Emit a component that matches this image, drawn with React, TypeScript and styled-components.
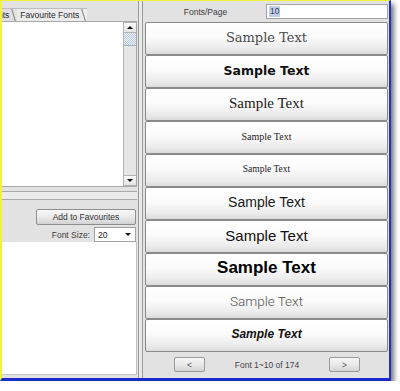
import React from "react";
import styled, { createGlobalStyle } from "styled-components";

const Global = createGlobalStyle`
  html, body { margin: 0; padding: 0; background: #ffffff; overflow: hidden; }
  body { font-family: "Liberation Sans", Arial, sans-serif; }
`;

const Frame = styled.div`
  width: 387px;
  height: 377px;
  border-top: 1px solid #f2f23c;
  border-left: 2px solid #f2f23c;
  border-right: 2px solid #1f2fd0;
  border-bottom: 3px solid #1a2bc8;
  box-shadow: 3px 4px 5px rgba(0, 0, 0, 0.55);
  background: #e2e2e2;
  display: grid;
  grid-template-columns: 135px 8px 1fr;
  overflow: hidden;
  font-size: 8.5px;
  color: #333;
`;

/* ---------- left column ---------- */
const LeftCol = styled.div`
  display: flex;
  flex-direction: column;
  min-height: 0;
`;

const TabStrip = styled.div`
  height: 20px;
  display: flex;
  align-items: flex-end;
  overflow: hidden;
  background: #e2e2e2;
`;

const Tab = styled.div<{ $active?: boolean; $offset?: number }>`
  position: relative;
  flex: none;
  height: 12px;
  line-height: 12px;
  padding: 0 8px 0 3px;
  margin-left: ${(p) => p.$offset ?? 0}px;
  white-space: nowrap;
  color: #2a2a2a;
  border-top: 1px solid #bdbdbd;
  background: ${(p) => (p.$active ? "#ececec" : "#e0e0e0")};
  &::after {
    content: "";
    position: absolute;
    right: 3px;
    top: 0;
    bottom: 0;
    width: 1px;
    background: #7d7d7d;
    transform: skewX(17deg);
  }
`;

const ListBox = styled.div`
  height: 166px;
  box-sizing: border-box;
  background: #ffffff;
  border-top: 1px solid #a8a8a8;
  border-bottom: 1px solid #a8a8a8;
  border-right: 1px solid #a8a8a8;
  display: flex;
  justify-content: flex-end;
`;

const ScrollBar = styled.div`
  width: 12px;
  display: flex;
  flex-direction: column;
  border-left: 1px solid #b4b4b4;
  background: #e6e6e6;
`;

const ScrollArrow = styled.div`
  height: 11px;
  flex: none;
  display: flex;
  align-items: center;
  justify-content: center;
  background: linear-gradient(#fafafa, #e4e4e4);
  border-bottom: 1px solid #b4b4b4;
  border-top: 1px solid #b4b4b4;
  box-sizing: border-box;
`;

const Triangle = styled.span<{ $down?: boolean }>`
  width: 0;
  height: 0;
  border-left: 3px solid transparent;
  border-right: 3px solid transparent;
  ${(p) =>
    p.$down
      ? "border-top: 3px solid #111;"
      : "border-bottom: 3px solid #111;"}
`;

const Thumb = styled.div`
  height: 13px;
  flex: none;
  box-sizing: border-box;
  border-bottom: 1px solid #9fb0cc;
  background-color: #dfe7f3;
  background-image: repeating-conic-gradient(#b9c8de 0% 25%, #eef2f9 0% 50%);
  background-size: 2px 2px;
`;

const Track = styled.div`
  flex: 1;
`;

const GroupHeader = styled.div`
  margin-top: 4px;
  height: 7px;
  border-top: 1px solid #a9a9a9;
  border-bottom: 1px solid #a9a9a9;
  background: #ebebeb;
`;

const GroupBody = styled.div`
  height: 42px;
  box-sizing: border-box;
  padding: 9px 1px 0 0;
  display: flex;
  flex-direction: column;
  align-items: flex-end;
  gap: 2px;
`;

const PushButton = styled.div<{ $w: number }>`
  width: ${(p) => p.$w}px;
  height: 16px;
  box-sizing: border-box;
  display: flex;
  align-items: center;
  justify-content: center;
  border: 1px solid #8e8e8e;
  border-radius: 2px;
  background: linear-gradient(#f8f8f8, #e9e9e9 55%, #d2d2d2);
  color: #333;
  font-size: 8.5px;
`;

const SizeRow = styled.div`
  display: flex;
  align-items: center;
  gap: 4px;
`;

const Label = styled.span`
  color: #3a3a3a;
  font-size: 8.5px;
`;

const Combo = styled.div`
  width: 42px;
  height: 15px;
  box-sizing: border-box;
  border: 1px solid #a2a2a2;
  background: #ffffff;
  display: flex;
  align-items: center;
  justify-content: space-between;
  padding: 0 4px 0 3px;
  color: #222;
`;

const BlankBox = styled.div`
  flex: 1;
  margin-bottom: 3px;
  background: #ffffff;
  border-right: 1px solid #c4c4c4;
  border-bottom: 1px solid #c4c4c4;
`;

/* ---------- splitter ---------- */
const Splitter = styled.div`
  background: linear-gradient(
    to right,
    #e2e2e2 0 1px,
    #9c9c9c 1px 2px,
    #e9e9e9 2px 5px,
    #9c9c9c 5px 6px,
    #e2e2e2 6px
  );
`;

/* ---------- right column ---------- */
const RightCol = styled.div`
  display: flex;
  flex-direction: column;
  min-height: 0;
  padding-right: 1px;
`;

const TopRow = styled.div`
  height: 21px;
  display: grid;
  grid-template-columns: 121px 1fr;
  align-items: center;
`;

const CenterLabel = styled.span`
  text-align: center;
  color: #3a3a3a;
  font-size: 8.5px;
`;

const TextInput = styled.div`
  height: 15px;
  box-sizing: border-box;
  border: 1px solid #a4a4a4;
  background: #ffffff;
  display: flex;
  align-items: center;
  padding-left: 2px;
`;

const Selected = styled.span`
  background: #c0cfe8;
  color: #34405a;
  padding: 0 1px;
  line-height: 11px;
`;

const SampleList = styled.div`
  display: flex;
  flex-direction: column;
`;

const SampleButton = styled.div`
  height: 33px;
  box-sizing: border-box;
  border: 1px solid #8a8a8a;
  border-radius: 2px;
  background: linear-gradient(#ffffff 0%, #fbfbfb 45%, #ececec 80%, #dcdcdc 100%);
  display: flex;
  align-items: center;
  justify-content: center;
  padding-bottom: 3px;
`;

const SampleText = styled.span<{
  $family: string;
  $size: number;
  $weight?: number;
  $italic?: boolean;
  $color?: string;
}>`
  font-family: ${(p) => p.$family};
  font-size: ${(p) => p.$size}px;
  font-weight: ${(p) => p.$weight ?? 400};
  font-style: ${(p) => (p.$italic ? "italic" : "normal")};
  color: ${(p) => p.$color ?? "#111"};
  white-space: nowrap;
`;

const BottomBar = styled.div`
  flex: 1;
  display: flex;
  align-items: center;
  justify-content: space-between;
  padding: 0 28px 1px 29px;
`;

const NavButton = styled.div`
  width: 31px;
  height: 15px;
  box-sizing: border-box;
  border: 1px solid #9a9a9a;
  border-radius: 2px;
  background: linear-gradient(#f6f6f6, #e6e6e6 60%, #d4d4d4);
  display: flex;
  align-items: center;
  justify-content: center;
  color: #555;
  font-size: 8.5px;
`;

const PageInfo = styled.span`
  color: #444;
  font-size: 8.5px;
`;

type Sample = {
  family: string;
  size: number;
  weight?: number;
  italic?: boolean;
  color?: string;
};

const SERIF = '"Liberation Serif", "Times New Roman", serif';
const SANS = '"Liberation Sans", Arial, sans-serif';

const samples: Sample[] = [
  { family: '"DejaVu Serif", serif', size: 13, color: "#4a4a4a" },
  { family: '"DejaVu Sans", Verdana, sans-serif', size: 12.5, weight: 700 },
  { family: SERIF, size: 15, color: "#1a1a1a" },
  { family: SERIF, size: 10, color: "#222" },
  { family: SERIF, size: 9.5, color: "#222" },
  { family: SANS, size: 14, color: "#1a1a1a" },
  { family: SANS, size: 15, color: "#111" },
  { family: SANS, size: 17, weight: 700, color: "#000" },
  { family: 'Roboto, "Liberation Sans", sans-serif', size: 13.5, weight: 300, color: "#555" },
  { family: SANS, size: 12, weight: 700, italic: true, color: "#111" },
];

export default function App() {
  return (
    <>
      <Global />
      <Frame>
        <LeftCol>
          <TabStrip>
            <Tab $offset={-17}>Fonts</Tab>
            <Tab $active>Favourite Fonts</Tab>
          </TabStrip>
          <ListBox>
            <ScrollBar>
              <ScrollArrow>
                <Triangle />
              </ScrollArrow>
              <Thumb />
              <Track />
              <ScrollArrow>
                <Triangle $down />
              </ScrollArrow>
            </ScrollBar>
          </ListBox>
          <GroupHeader />
          <GroupBody>
            <PushButton $w={100}>Add to Favourites</PushButton>
            <SizeRow>
              <Label>Font Size:</Label>
              <Combo>
                <span>20</span>
                <Triangle $down />
              </Combo>
            </SizeRow>
          </GroupBody>
          <BlankBox />
        </LeftCol>
        <Splitter />
        <RightCol>
          <TopRow>
            <CenterLabel>Fonts/Page</CenterLabel>
            <TextInput>
              <Selected>10</Selected>
            </TextInput>
          </TopRow>
          <SampleList>
            {samples.map((s, i) => (
              <SampleButton key={i}>
                <SampleText
                  $family={s.family}
                  $size={s.size}
                  $weight={s.weight}
                  $italic={s.italic}
                  $color={s.color}
                >
                  Sample Text
                </SampleText>
              </SampleButton>
            ))}
          </SampleList>
          <BottomBar>
            <NavButton>&lt;</NavButton>
            <PageInfo>Font 1~10 of 174</PageInfo>
            <NavButton>&gt;</NavButton>
          </BottomBar>
        </RightCol>
      </Frame>
    </>
  );
}
